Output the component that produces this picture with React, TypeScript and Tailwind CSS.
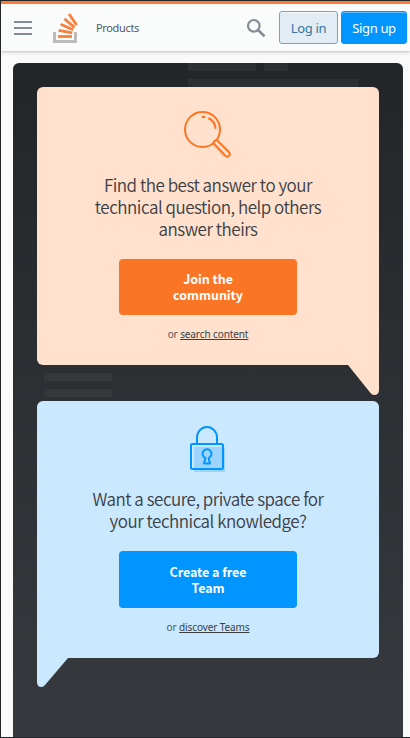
import type { ReactNode } from "react";

const SOURCE = "font-['Noto_Sans_CJK_JP','Noto_Sans',sans-serif]";

function Logo() {
  return (
    <svg width="26" height="32" viewBox="0 0 26 32" fill="none" className="ml-[21px] mt-[2px] shrink-0">
      <path d="M1.5 20v9.500h21V20" stroke="#bcbbbb" strokeWidth="3" />
      <g stroke="#f9803b" strokeWidth="2.800">
        <path d="M5 24.500h14" />
        <path d="M5.600 18.400l13.600 2.400" />
        <path d="M7.600 12.300l12.600 5.500" />
        <path d="M11.400 6.800l10 8.600" />
        <path d="M16 2l7.600 11" />
      </g>
    </svg>
  );
}

function Header() {
  return (
    <header className="relative z-10 flex h-[50px] shrink-0 items-center border-t-[3px] border-[#fb7c35] bg-[#fafbfb] pb-px pl-[13px] pr-[3px] shadow-[0_1px_2px_rgba(0,0,0,0.16),0_2px_6px_rgba(0,0,0,0.07)]">
      <div className="mt-[2px] flex w-[18px] flex-col gap-[4px]">
        <span className="h-[2px] bg-[#848d95]" />
        <span className="h-[2px] bg-[#848d95]" />
        <span className="h-[2px] bg-[#848d95]" />
      </div>
      <Logo />
      <span className="ml-[17px] mt-[2px] font-['Noto_Sans',sans-serif] text-[11px] tracking-[-0.350px] text-[#535a60]">Products</span>
      <svg width="20" height="20" viewBox="0 0 20 20" fill="none" stroke="#848d95" className="ml-auto mr-[13px] mt-[2px] shrink-0">
        <circle cx="7.800" cy="7.800" r="5.800" strokeWidth="2.200" />
        <path d="M12 12l6.500 6.300" strokeWidth="2.600" />
      </svg>
      <button className="mt-px h-[33px] w-[59px] rounded-[3px] border border-[#6fa5c8] bg-[#e1ecf4] pt-[2px] font-['Noto_Sans',sans-serif] text-[13px] tracking-[-0.350px] text-[#39739d] shadow-[inset_0_1px_0_rgba(255,255,255,0.7)]">
        Log in
      </button>
      <button className="ml-[3px] mt-px h-[33px] w-[66px] rounded-[3px] border border-[#0095ff] bg-[#0095ff] pt-[2px] font-['Noto_Sans',sans-serif] text-[13px] tracking-[-0.350px] text-white shadow-[inset_0_1px_0_rgba(255,255,255,0.4)]">
        Sign up
      </button>
    </header>
  );
}

function Magnifier() {
  return (
    <svg width="48" height="48" viewBox="0 0 48 48" fill="none" stroke="#fb7624" strokeWidth="2" strokeLinecap="round">
      <path d="M28 33l3-3 11 14-3 2z" fill="#fbc7a1" stroke="none" />
      <circle cx="18.500" cy="18.500" r="17.500" />
      <path d="M18.500 6h2" />
      <path d="M25 7.500c3.600 1.800 6 5.200 6.500 9.500" />
      <path d="M30.500 33.300a2.300 2.300 0 0 1 3.300-3.300L45 41.200a2.500 2.500 0 0 1-3.600 3.600z" fill="#ffe1cd" />
    </svg>
  );
}

function Lock() {
  return (
    <svg width="37" height="47" viewBox="0 0 37 47" fill="none" stroke="#0095ff" strokeWidth="2">
      <rect x="5" y="22" width="31" height="25" rx="1" fill="#9cd4fd" stroke="none" />
      <path d="M8 19v-6.500a10 10.500 0 0 1 20 0V19" />
      <rect x="2" y="19" width="32" height="25" rx="1.500" />
      <path d="M16.400 33a4.500 4.500 0 1 1 3.200 0l1.400 5.500h-6z" strokeLinejoin="round" />
    </svg>
  );
}

type CardProps = {
  tone: string;
  icon: ReactNode;
  title: ReactNode;
  action: ReactNode;
  actionTone: string;
  link: string;
  tail: ReactNode;
};

function Card({ tone, icon, title, action, actionTone, link, tail }: CardProps) {
  return (
    <section className={`relative flex flex-col items-center ${SOURCE} ${tone}`}>
      {icon}
      <h2 className="whitespace-nowrap text-center text-[17px] font-[350] leading-[22px] tracking-[-0.480px] text-[#3b4045]">{title}</h2>
      <button className={`w-[178px] rounded-[4px] text-[12.500px] font-bold leading-[16px] tracking-[-0.050px] text-white ${actionTone}`}>{action}</button>
      <p className="mt-[12px] font-['Noto_Sans',sans-serif] text-[10px] leading-[14px] tracking-[-0.1px] text-[#535a60]">
        or <a className="text-[#3b4045] underline underline-offset-[1px]">{link}</a>
      </p>
      {tail}
    </section>
  );
}

export default function App() {
  return (
    <main className="flex h-[738px] w-[410px] flex-col overflow-hidden border-y border-l border-[#242629] bg-[#fafafb]">
      <Header />
      <div className="relative ml-[12px] mt-[12px] flex h-[674px] w-[390px] shrink-0 flex-col gap-[36px] rounded-t-[6px] bg-linear-to-b from-[#232629] to-[#363a3e] px-[24px] pt-[24px]">
        <div className="absolute left-[175px] top-0 h-[8px] w-[68px] bg-[#2e3134]" />
        <div className="absolute left-[251px] top-0 h-[8px] w-[24px] bg-[#2e3134]" />
        <div className="absolute left-[175px] top-[16px] h-[8px] w-[170px] bg-[#2d3033]" />
        <div className="absolute left-[31px] top-[310px] h-[8px] w-[68px] bg-[#34383b]" />
        <div className="absolute left-[31px] top-[326px] h-[8px] w-[68px] bg-[#34383b]" />
        <Card
          tone="h-[278px] rounded-[6px] rounded-br-none bg-[#ffe1cd] pt-[24px]"
          icon={<div className="mb-[15px] h-[48px]"><Magnifier /></div>}
          title={<>Find the best answer to your<br />technical question, help others<br />answer theirs</>}
          action={<>Join the<br />community</>}
          actionTone="mt-[19px] h-[56px] bg-[#fa7626]"
          link="search content"
          tail={
            <svg className="absolute right-0 top-[277px]" width="32" height="32" viewBox="0 0 32 32" fill="#ffe1cd">
              <path d="M0 0h32v26q0 5-5 5-2 0-3.500-2L1 1z" />
            </svg>
          }
        />
        <Card
          tone="h-[257px] rounded-[6px] rounded-bl-none bg-[#cae8fe] pt-[24px]"
          icon={<div className="mb-[16px] h-[47px] pr-[1px]"><Lock /></div>}
          title={<>Want a secure, private space for<br />your technical knowledge?</>}
          action={<>Create a free<br />Team</>}
          actionTone="mt-[19px] h-[57px] bg-[#0095ff]"
          link="discover Teams"
          tail={
            <svg className="absolute left-0 top-[256px]" width="32" height="31" viewBox="0 0 32 31" fill="#cae8fe">
              <path d="M0 0h31v1L8 28q-1.500 2-3.500 2Q0 30 0 25z" />
            </svg>
          }
        />
      </div>
    </main>
  );
}
